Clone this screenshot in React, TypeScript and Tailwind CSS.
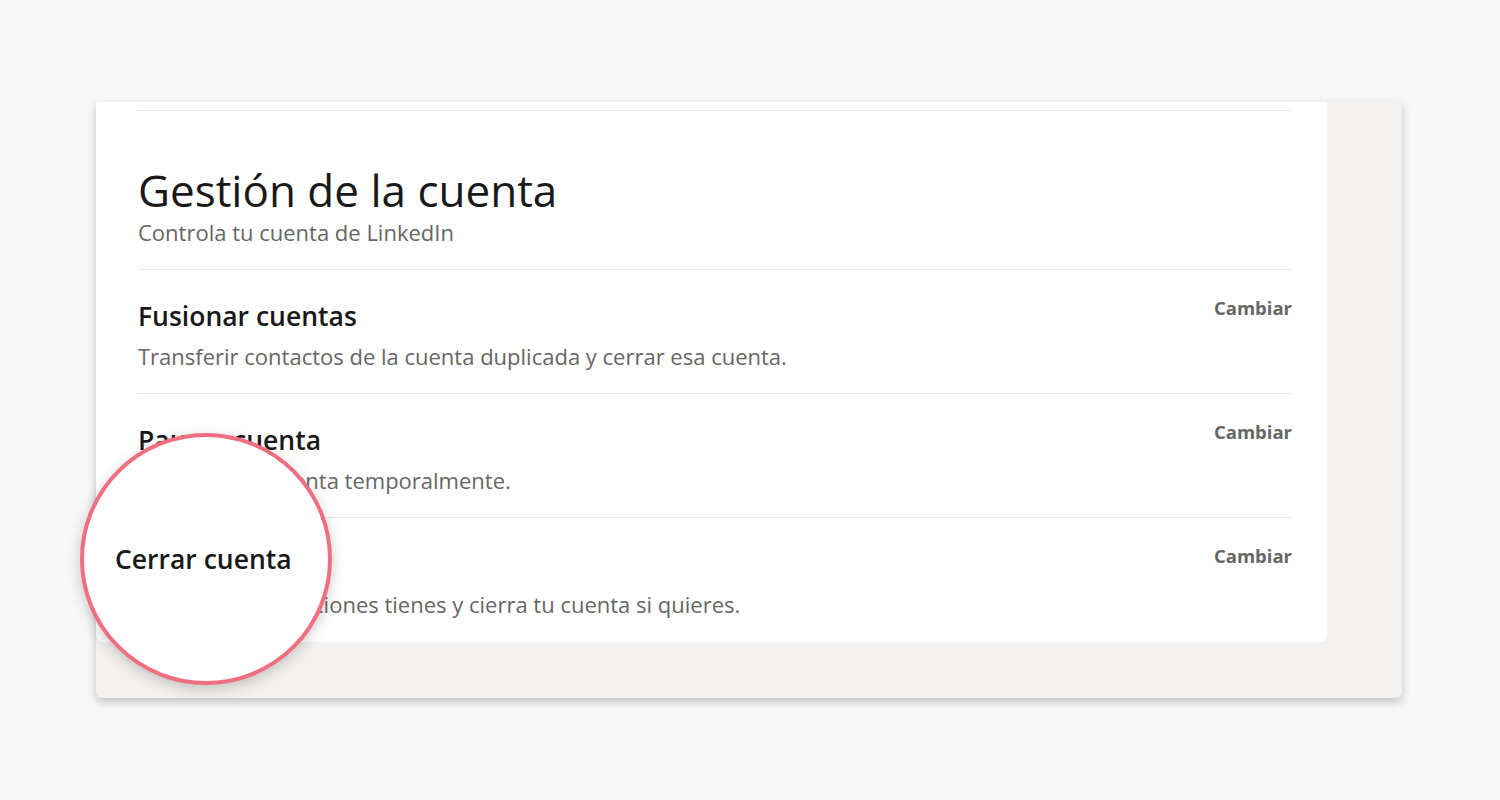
import React from "react";

interface Row {
  title: string;
  description: string;
}

const rows: Row[] = [
  {
    title: "Fusionar cuentas",
    description: "Transferir contactos de la cuenta duplicada y cerrar esa cuenta.",
  },
  {
    title: "Pausar cuenta",
    description: "Desactiva tu cuenta temporalmente.",
  },
  {
    title: "Cerrar cuenta",
    description: "Descubre qué opciones tienes y cierra tu cuenta si quieres.",
  },
];

export default function App() {
  return (
    <div
      className="w-[1500px] h-[800px] bg-[#f7f7f7] pt-[102px] pl-[96px]"
      style={{ fontFamily: '"Open Sans", "Noto Sans", sans-serif' }}
    >
      <div className="relative w-[1306px] h-[596px] bg-[#f2f1ef] rounded-b-md shadow-[0_4px_10px_rgba(0,0,0,0.22)]">
        {/* White settings card */}
        <div className="w-[1231px] bg-white rounded-b-lg pl-[42px] pr-[35px] pt-[8px]">
          <div className="border-t border-[#e8e8e8]" />

          {/* Header */}
          <div className="pt-[53px] pb-[23px] border-b border-[#e6e6e6]">
            <h1 className="text-[44px] leading-[52px] text-[#191919] font-normal">
              Gestión de la cuenta
            </h1>
            <p className="text-[22px] leading-[28px] text-[#666666] mt-[2px]">
              Controla tu cuenta de LinkedIn
            </p>
          </div>

          {/* Rows */}
          {rows.map((row, i) => (
            <div
              key={row.title}
              className={`flex items-start justify-between h-[124px] pt-[29px] ${
                i < rows.length - 1 ? "border-b border-[#e6e6e6]" : ""
              }`}
            >
              <div>
                <h2 className="text-[26.5px] leading-[34px] font-semibold text-[#191919]">
                  {row.title}
                </h2>
                <p className="text-[22px] leading-[28px] text-[#666666] mt-[9px]">
                  {row.description}
                </p>
              </div>
              <button className="text-[18.5px] leading-[24px] font-bold text-[#666666] -mt-[3px]">
                Cambiar
              </button>
            </div>
          ))}
        </div>

        {/* Magnifier highlight */}
        <div className="absolute left-[-16px] top-[331px] w-[252px] h-[252px] rounded-full bg-white border-[4px] border-[#ef6f80] shadow-[0_4px_14px_rgba(0,0,0,0.2)] flex items-center">
          <span className="pl-[31px] text-[26.5px] font-semibold text-[#191919] leading-none">
            Cerrar cuenta
          </span>
        </div>
      </div>
    </div>
  );
}
